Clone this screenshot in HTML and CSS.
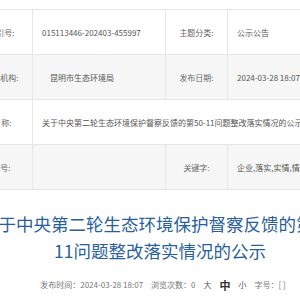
FILE: index.html
```html
<!DOCTYPE html>
<html lang="zh-CN">
<head>
    <meta charset="UTF-8">
    <meta name="viewport" content="width=device-width, initial-scale=1.0">
    <title>关于中央第二轮生态环境保护督察反馈的第50-11问题整改落实情况的公示</title>
    <link rel="stylesheet" href="styles.css">
</head>
<body>
    <div class="page">
        <!-- Document info table -->
        <table class="info">
            <colgroup>
                <col class="col-label">
                <col class="col-value">
                <col class="col-label">
                <col class="col-value2">
            </colgroup>
            <tr>
                <td class="label">索引号:</td>
                <td class="value">015113446-202403-455997</td>
                <td class="label">主题分类:</td>
                <td class="value">公示公告</td>
            </tr>
            <tr class="alt">
                <td class="label">发布机构:</td>
                <td class="value indent">昆明市生态环境局</td>
                <td class="label">发布日期:</td>
                <td class="value">2024-03-28 18:07</td>
            </tr>
            <tr>
                <td class="label">名 称:</td>
                <td class="value" colspan="3">关于中央第二轮生态环境保护督察反馈的第50-11问题整改落实情况的公示</td>
            </tr>
            <tr class="alt">
                <td class="label">文号:</td>
                <td class="value"></td>
                <td class="label">关键字:</td>
                <td class="value">企业,落实,实情,情况,问题,整改</td>
            </tr>
        </table>

        <h1 class="title">关于中央第二轮生态环境保护督察反馈的第50-11问题整改落实情况的公示</h1>

        <div class="meta">
            <span>发布时间：2024-03-28 18:07</span>
            <span>浏览次数：0</span>
            <span class="size">大</span>
            <span class="size current">中</span>
            <span class="size">小</span>
            <span>字号：[ ]</span>
        </div>
    </div>
</body>
</html>
```

FILE: styles.css
```css
body {
    margin: 0;
    overflow: hidden;
    background-color: #fff;
    font-family: "Noto Sans CJK SC", "Noto Sans", sans-serif;
}

.page {
    width: 386px;
    margin-left: -30px;
}

/* Info table */
.info {
    width: 100%;
    margin-top: 9px;
    border-collapse: collapse;
    table-layout: fixed;
    font-size: 8px;
}

.col-label {
    width: 62px;
}

.col-value {
    width: 133px;
}

.info td {
    height: 44px;
    padding: 0;
    border: 1px solid #e6e6e6;
    white-space: nowrap;
    overflow: hidden;
}

.info tr.alt td {
    background-color: #f6f6f6;
}

.info .label {
    text-align: center;
    color: #666;
}

.info .value {
    padding-left: 9px;
    color: #555;
}

.info .indent {
    padding-left: 17px;
}

/* Title */
.title {
    margin: 20px 15px 0 9px;
    text-align: center;
    font-size: 17.5px;
    font-weight: normal;
    line-height: 27px;
    word-break: break-all;
    color: #285fa0;
}

/* Meta line */
.meta {
    display: flex;
    justify-content: center;
    align-items: center;
    gap: 8px;
    margin-top: 15px;
    font-size: 8px;
    line-height: 12px;
    color: #777;
}

.meta .size {
    color: #555;
}

.meta .current {
    font-size: 11px;
    font-weight: bold;
    color: #333;
}
```
